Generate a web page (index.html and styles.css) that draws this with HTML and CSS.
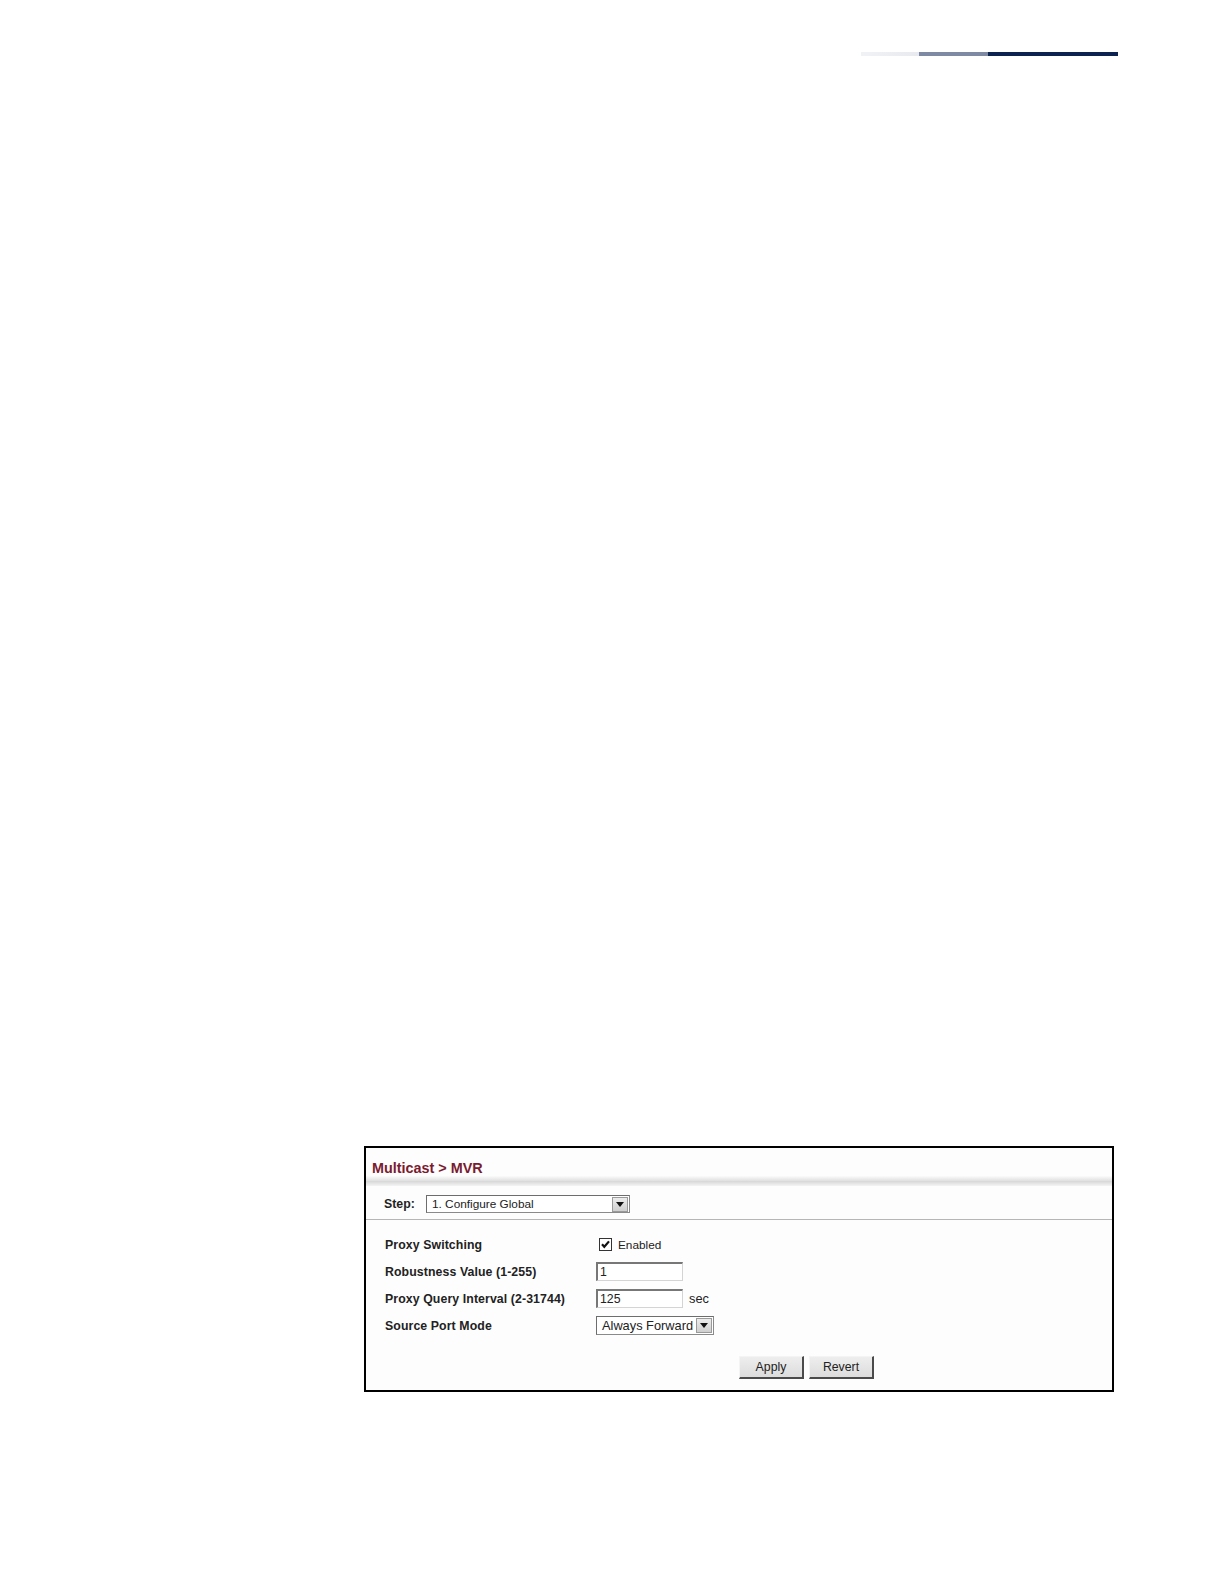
FILE: index.html
```html
<!DOCTYPE html>
<html>
<head>
<meta charset="utf-8">
<link rel="stylesheet" href="styles.css">
</head>
<body>
<div class="topbar">
  <span class="seg seg-light"></span>
  <span class="seg seg-mid"></span>
  <span class="seg seg-dark"></span>
</div>

<div class="panel">
  <div class="title">Multicast &gt; MVR</div>
  <div class="shade"></div>
  <div class="step-row">
    <span class="step-label">Step:</span>
    <div class="select select-step">
      <span class="select-text">1. Configure Global</span>
      <span class="select-btn"><span class="tri"></span></span>
    </div>
  </div>
  <div class="form">
    <div class="row">
      <span class="label">Proxy Switching</span>
      <span class="value">
        <span class="checkbox"><svg width="11" height="11" viewBox="0 0 11 11"><path d="M2 5.2 L4.3 7.8 L9 2.4" fill="none" stroke="#111" stroke-width="2.2"/></svg></span>
        <span class="text">Enabled</span>
      </span>
    </div>
    <div class="row">
      <span class="label">Robustness Value (1-255)</span>
      <span class="value"><span class="input">1</span></span>
    </div>
    <div class="row">
      <span class="label">Proxy Query Interval (2-31744)</span>
      <span class="value"><span class="input">125</span><span class="unit">sec</span></span>
    </div>
    <div class="row">
      <span class="label">Source Port Mode</span>
      <span class="value">
        <div class="select select-mode">
          <span class="select-text">Always Forward</span>
          <span class="select-btn"><span class="tri"></span></span>
        </div>
      </span>
    </div>
  </div>
  <div class="buttons">
    <span class="btn">Apply</span>
    <span class="btn">Revert</span>
  </div>
</div>
</body>
</html>
```

FILE: styles.css
```css
html, body {
  margin: 0;
  padding: 0;
  background: #ffffff;
}
body {
  font-family: "Liberation Sans", Arial, sans-serif;
  color: #222;
  min-height: 1584px;
}

.topbar {
  display: flex;
  justify-content: flex-end;
  padding: 52px 106px 0 0;
  height: 4px;
}
.seg {
  display: block;
  height: 4px;
}
.seg-light {
  width: 58px;
  background: linear-gradient(to right, #f1f2f5, #e8eaef);
}
.seg-mid {
  width: 69px;
  background: #7e8aa3;
}
.seg-dark {
  width: 130px;
  background: #0c2352;
}

.panel {
  margin: 1090px 0 0 364px;
  width: 750px;
  box-sizing: border-box;
  border: 2px solid #000;
  background: #fdfdfd;
}

.title {
  padding: 12px 0 0 6px;
  line-height: 16px;
  font-size: 14.4px;
  font-weight: bold;
  color: #7a1b30;
}
.shade {
  height: 10px;
  background: linear-gradient(to bottom, #fbfbfb 0%, #e2e2e2 45%, #d9d9d9 55%, #f4f4f4 100%);
}

.step-row {
  display: flex;
  align-items: center;
  height: 34px;
  box-sizing: border-box;
  padding: 3px 0 0 18px;
  border-bottom: 1px solid #b6b6b6;
}
.step-label {
  font-size: 12.3px;
  font-weight: bold;
  color: #222;
  width: 42px;
}

.select {
  display: flex;
  align-items: center;
  height: 18px;
  box-sizing: border-box;
  border: 1px solid #8a8a8a;
  border-top-color: #6d6d6d;
  border-left-color: #6d6d6d;
  background: #fff;
}
.select-step {
  width: 204px;
}
.select-mode {
  width: 118px;
  height: 19px;
}
.select-text {
  flex: 1;
  padding-left: 5px;
  font-size: 11.8px;
  color: #222;
  white-space: nowrap;
  overflow: hidden;
}
.select-mode .select-text {
  font-size: 12.8px;
}
.select-btn {
  width: 16px;
  height: 15px;
  margin-right: 1px;
  box-sizing: border-box;
  border: 1px solid #9a9a9a;
  background: linear-gradient(to bottom, #ececec, #cfcfcf);
  display: flex;
  align-items: center;
  justify-content: center;
}
.tri {
  width: 0;
  height: 0;
  border-left: 4px solid transparent;
  border-right: 4px solid transparent;
  border-top: 5px solid #111;
}

.form {
  padding: 11px 0 0 19px;
}
.row {
  display: flex;
  align-items: center;
  height: 27px;
}
.label {
  width: 211px;
  font-size: 12.3px;
  font-weight: bold;
  letter-spacing: 0.1px;
  color: #222;
}
.value {
  display: flex;
  align-items: center;
}
.checkbox {
  width: 13px;
  height: 13px;
  box-sizing: border-box;
  border: 1px solid #333;
  background: #fff;
  margin-left: 3px;
  display: flex;
  align-items: center;
  justify-content: center;
}
.text {
  margin-left: 6px;
  font-size: 11.8px;
  color: #222;
}
.input {
  width: 87px;
  height: 19px;
  box-sizing: border-box;
  border: 1px solid #d4d4d4;
  border-top: 2px solid #777;
  border-left: 2px solid #777;
  background: #fff;
  font-size: 12.3px;
  line-height: 16px;
  padding-left: 2px;
  color: #222;
}
.unit {
  margin-left: 6px;
  font-size: 12.8px;
  color: #222;
}

.buttons {
  display: flex;
  gap: 5px;
  padding: 17px 0 11px 373px;
}
.btn {
  width: 65px;
  height: 23px;
  box-sizing: border-box;
  border: 1px solid #f4f4f4;
  border-right: 2px solid #4a4a4a;
  border-bottom: 2px solid #4a4a4a;
  background: linear-gradient(to bottom, #eeeeee, #dcdcdc);
  font-size: 12.3px;
  color: #222;
  display: flex;
  align-items: center;
  justify-content: center;
}
```
